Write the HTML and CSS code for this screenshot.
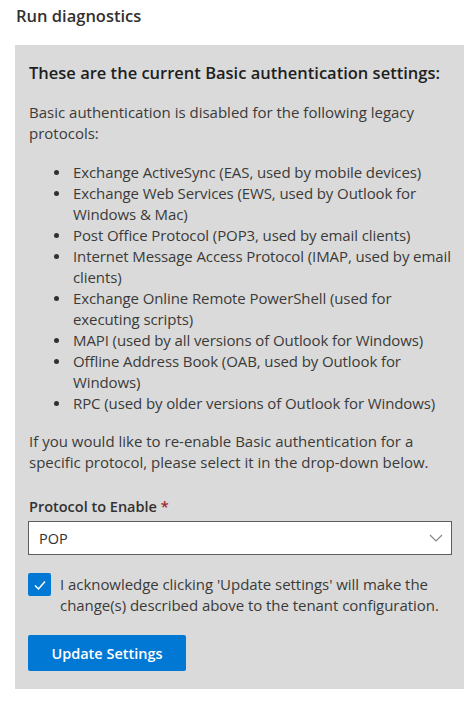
FILE: index.html
```html
<!DOCTYPE html>
<html>
<head>
<meta charset="utf-8">
<link rel="stylesheet" href="styles.css">
</head>
<body>
<h1 class="title">Run diagnostics</h1>
<div class="panel">
  <h2 class="heading">These are the current Basic authentication settings:</h2>
  <p class="para">Basic authentication is disabled for the following legacy protocols:</p>
  <ul class="list">
    <li>Exchange ActiveSync (EAS, used by mobile devices)</li>
    <li>Exchange Web Services (EWS, used by Outlook for Windows &amp; Mac)</li>
    <li>Post Office Protocol (POP3, used by email clients)</li>
    <li>Internet Message Access Protocol (IMAP, used by email clients)</li>
    <li>Exchange Online Remote PowerShell (used for executing scripts)</li>
    <li>MAPI (used by all versions of Outlook for Windows)</li>
    <li>Offline Address Book (OAB, used by Outlook for Windows)</li>
    <li>RPC (used by older versions of Outlook for Windows)</li>
  </ul>
  <p class="para para2">If you would like to re-enable Basic authentication for a specific protocol, please select it in the drop-down below.</p>
  <div class="label">Protocol to Enable <span class="req">*</span></div>
  <div class="select">
    <span class="select-value">POP</span>
    <svg class="chevron" width="14" height="8" viewBox="0 0 14 8"><path d="M1 1 L7 7 L13 1" fill="none" stroke="#8a8886" stroke-width="1.2"/></svg>
  </div>
  <div class="check-row">
    <span class="checkbox"><svg width="14" height="12" viewBox="0 0 14 12"><path d="M2 6.5 L5.5 10 L12 2.5" fill="none" stroke="#fff" stroke-width="1.5"/></svg></span>
    <span class="check-text">I acknowledge clicking 'Update settings' will make the change(s) described above to the tenant configuration.</span>
  </div>
  <button class="btn">Update Settings</button>
</div>
</body>
</html>
```
FILE: styles.css
```css
* { box-sizing: border-box; }
body {
  margin: 0;
  background: #fff;
  font-family: "Open Sans", "Noto Sans", sans-serif;
  color: #323130;
}
.title {
  margin: 0;
  padding: 5px 16px 0;
  height: 45px;
  font-size: 16.5px;
  font-weight: 600;
  line-height: 22px;
}
.panel {
  width: 449px;
  margin-left: 15px;
  background: #dadada;
  padding: 17px 8px 18px 14px;
}
.heading {
  margin: 0;
  font-size: 16.5px;
  font-weight: 600;
  line-height: 22px;
  color: #201f1e;
}
.para {
  margin: 18px 0 0;
  font-size: 15px;
  line-height: 21px;
  color: #3b3a39;
}
.list {
  margin: 18px 0 0;
  padding-left: 25px;
  list-style: none;
  font-size: 15px;
  line-height: 21px;
  letter-spacing: -0.1px;
  color: #3b3a39;
}
.list li {
  display: flex;
}
.list li::before {
  content: "";
  flex: none;
  width: 5px;
  height: 5px;
  border-radius: 50%;
  background: #323130;
  margin: 8px 14px 0 0;
}
.para2 { margin-top: 17px; }
.label {
  margin-top: 24px;
  font-size: 14.5px;
  font-weight: 600;
  line-height: 20px;
  color: #323130;
}
.req { color: #a4262c; }
.select {
  margin-top: 4px;
  margin-left: -1px;
  width: 424px;
  height: 34px;
  background: #fff;
  border: 1px solid #605e5c;
  display: flex;
  align-items: center;
  justify-content: space-between;
  padding: 0 8px 0 10px;
  font-size: 14.5px;
  color: #323130;
}
.check-row {
  margin-top: 19px;
  margin-left: -1px;
  display: flex;
  align-items: flex-start;
  gap: 9px;
}
.checkbox {
  flex: none;
  width: 23px;
  height: 23px;
  margin-top: -1px;
  background: #0078d4;
  border-radius: 2px;
  display: flex;
  align-items: center;
  justify-content: center;
}
.check-text {
  font-size: 15px;
  line-height: 21px;
  letter-spacing: -0.05px;
  color: #3b3a39;
}
.btn {
  display: block;
  margin-top: 19px;
  margin-left: -1px;
  width: 158px;
  height: 36px;
  border: none;
  border-radius: 2px;
  background: #0078d4;
  color: #fff;
  font-family: "Open Sans", sans-serif;
  font-size: 14.5px;
  font-weight: 600;
}
```
